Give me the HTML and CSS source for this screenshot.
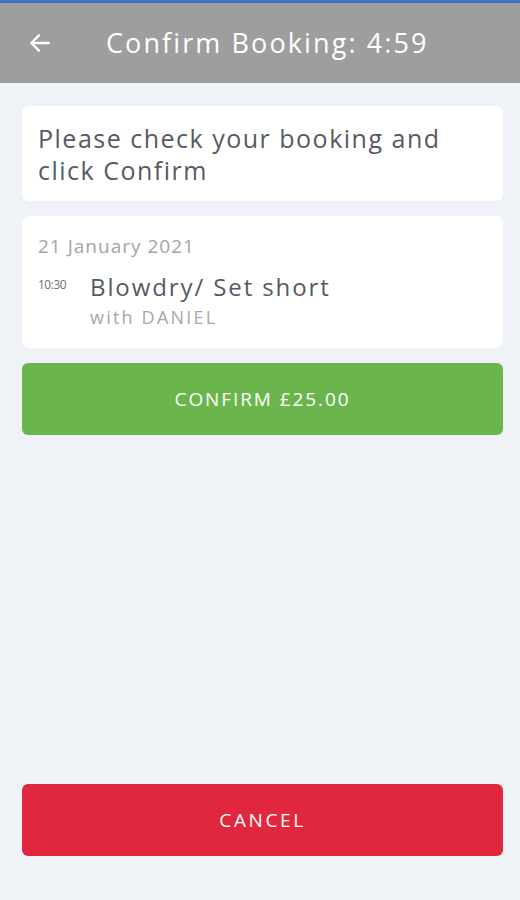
FILE: index.html
```html
<!DOCTYPE html>
<html lang="en">
<head>
  <meta charset="UTF-8">
  <meta name="viewport" content="width=device-width, initial-scale=1.0">
  <title>Confirm Booking</title>
  <link rel="stylesheet" href="styles.css">
</head>
<body>
  <div class="topline"></div>
  <header class="appbar">
    <span class="back">
      <svg width="26" height="26" viewBox="0 0 24 24"><path d="M20 12H5M11 5l-7 7 7 7" fill="none" stroke="#fff" stroke-width="2.2" stroke-linecap="round" stroke-linejoin="round"/></svg>
    </span>
    <h1 class="title">Confirm Booking: 4:59</h1>
  </header>

  <main class="content">
    <div class="card intro">Please check your booking and click Confirm</div>

    <div class="card booking">
      <div class="date">21 January 2021</div>
      <div class="item">
        <span class="time">10:30</span>
        <div class="detail">
          <div class="service">Blowdry/ Set short</div>
          <div class="staff">with DANIEL</div>
        </div>
      </div>
    </div>

    <button class="btn confirm">CONFIRM £25.00</button>

    <button class="btn cancel">CANCEL</button>
  </main>
</body>
</html>
```

FILE: styles.css
```css
body {
  margin: 0;
  background-color: #eff3f8;
  font-family: "Open Sans", sans-serif;
  min-height: 900px;
  display: flex;
  flex-direction: column;
}
.topline {
  height: 3px;
  background-color: #3c74c4;
}
.appbar {
  height: 80px;
  background-color: #9e9e9e;
  display: flex;
  align-items: center;
  color: #fff;
}
.back {
  width: 26px;
  margin-left: 27px;
  display: flex;
}
.title {
  margin: 0 0 0 53px;
  font-weight: 400;
  font-size: 27px;
  letter-spacing: 2.1px;
  position: relative;
  top: -1px;
}
.content {
  flex: 1;
  display: flex;
  flex-direction: column;
  padding: 23px 17px 44px 22px;
}
.card {
  background: #fff;
  border-radius: 7px;
  margin-bottom: 15px;
}
.intro {
  padding: 16px 16px 15px 16px;
  font-size: 25px;
  line-height: 32px;
  color: #555a65;
  letter-spacing: 1.5px;
}
.booking {
  padding: 18px 16px 18px 16px;
}
.date {
  font-size: 19px;
  color: #a2a4a8;
  line-height: 24px;
  letter-spacing: 1px;
}
.item {
  display: flex;
  margin-top: 14px;
}
.time {
  width: 52px;
  font-size: 12px;
  color: #6b6e75;
  line-height: 26px;
  letter-spacing: -0.5px;
}
.service {
  font-size: 24px;
  line-height: 30px;
  color: #555a65;
  letter-spacing: 1.9px;
}
.staff {
  font-size: 18px;
  line-height: 26px;
  margin-top: 2px;
  color: #a5a7ab;
  letter-spacing: 2.2px;
}
.btn {
  width: 100%;
  height: 72px;
  border: none;
  border-radius: 6px;
  color: #fff;
  font-family: "Open Sans", sans-serif;
  font-size: 19px;
  cursor: pointer;
}
.confirm {
  background-color: #6ab64c;
  letter-spacing: 1.9px;
}
.cancel {
  margin-top: auto;
  background-color: #e1273d;
  letter-spacing: 2.6px;
}
```
